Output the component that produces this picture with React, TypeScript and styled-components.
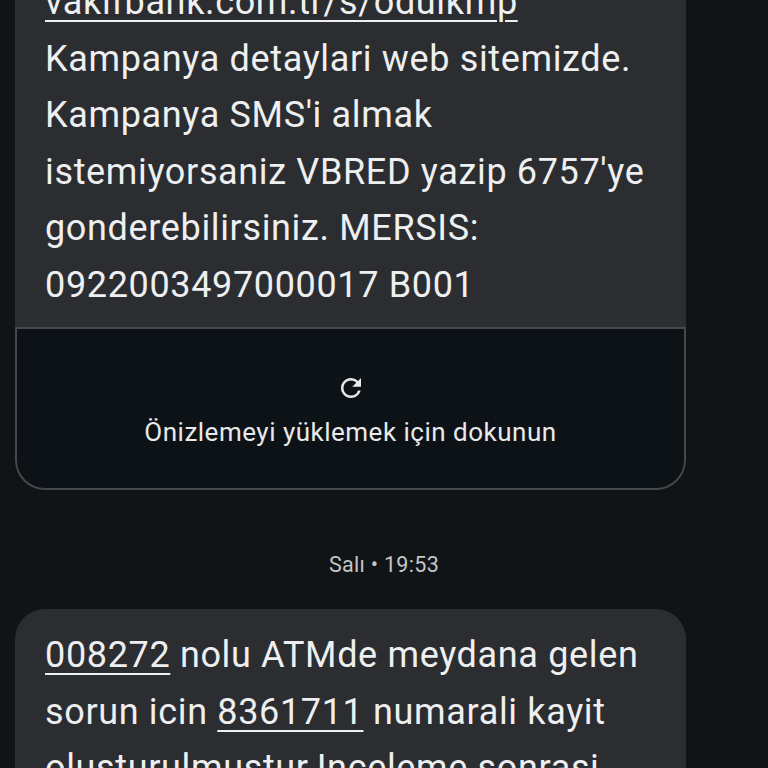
import React from "react";
import styled, { createGlobalStyle } from "styled-components";
import { MdRefresh } from "react-icons/md";

const GlobalStyle = createGlobalStyle`
  html, body {
    margin: 0;
    padding: 0;
    background: #111417;
  }
  body {
    font-family: Roboto, "Noto Sans", "Liberation Sans", sans-serif;
    overflow: hidden;
  }
`;

const Screen = styled.div`
  width: 768px;
  height: 768px;
  overflow: hidden;
  background: #111417;
`;

// scrolled conversation: the first bubble starts above the viewport
const Thread = styled.div`
  display: flex;
  flex-direction: column;
  margin-top: -42px;
`;

const Bubble = styled.div`
  margin: 0 82px 0 15px;
  background: #2b2d31;
  border-radius: 30px;
  overflow: hidden;
`;

const BubbleText = styled.div<{ $top?: number }>`
  padding: ${(p) => p.$top ?? 16}px 30px 14px 30px;
  font-size: 36px;
  line-height: 56.5px;
  color: #eeeff0;
  letter-spacing: 0.65px;
`;

const Link = styled.span`
  text-decoration: underline;
  text-decoration-thickness: 2px;
  text-underline-offset: 6px;
`;

const Preview = styled.div`
  display: flex;
  flex-direction: column;
  align-items: center;
  gap: 14px;
  padding: 44px 0 41px;
  background: #0d1217;
  border: 2px solid #45484d;
  border-radius: 0 0 30px 30px;
  color: #e8e9ea;
`;

const PreviewLabel = styled.div`
  font-size: 26px;
  line-height: 30px;
  letter-spacing: 0.5px;
`;

const Stamp = styled.div`
  text-align: center;
  font-size: 21.5px;
  letter-spacing: 0.3px;
  color: #c4c6c8;
  padding: 61px 0 30px;
  line-height: 28px;
`;

export default function App() {
  return (
    <>
      <GlobalStyle />
      <Screen>
        <Thread>
          <Bubble>
            <BubbleText>
              <Link>vakifbank.com.tr/s/odulkmp</Link>
              <br />
              Kampanya detaylari web sitemizde. Kampanya SMS'i almak
              istemiyorsaniz VBRED yazip 6757'ye gonderebilirsiniz. MERSIS:
              0922003497000017 B001
            </BubbleText>
            <Preview>
              <MdRefresh size={30} />
              <PreviewLabel>Önizlemeyi yüklemek için dokunun</PreviewLabel>
            </Preview>
          </Bubble>
          <Stamp>Salı • 19:53</Stamp>
          <Bubble>
            <BubbleText $top={18}>
              <Link>008272</Link> nolu ATMde meydana gelen sorun icin{" "}
              <Link>8361711</Link> numarali kayit olusturulmustur.Inceleme
              sonrasi bilgilendirme yapilacaktir.
            </BubbleText>
          </Bubble>
        </Thread>
      </Screen>
    </>
  );
}
